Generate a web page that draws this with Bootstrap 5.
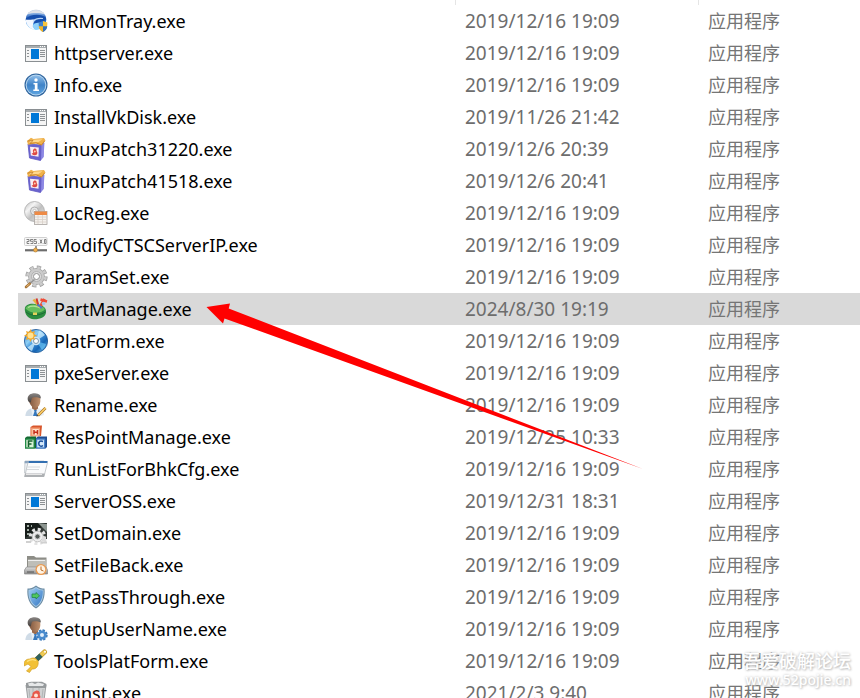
<!DOCTYPE html>
<html lang="zh-CN">
<head>
<meta charset="utf-8">
<meta name="viewport" content="width=device-width, initial-scale=1">
<title>文件列表</title>
<link href="https://cdn.jsdelivr.net/npm/bootstrap@5.3.0/dist/css/bootstrap.min.css" rel="stylesheet">
<style>
body { font-family: "Noto Sans", "Noto Sans CJK SC", sans-serif; background: #fff; color: #000; }
.explorer { padding-left: 18px; }
.files { table-layout: fixed; border-collapse: separate; border-spacing: 0; font-size: 18px; line-height: 32px; }
.files .c-name { width: 438px; }
.files .c-date { width: 243px; }
.files thead th { height: 5px; padding: 0; border-right: 1px solid #e5e5e5; }
.files thead th:last-child { border-right: 0; }
.files tbody td { height: 32px; padding: 0 0 0 9px; color: #6d6d6d; white-space: nowrap; vertical-align: top; }
.files tbody td:first-child { padding-left: 6px; color: #000; }
.files tbody td:nth-child(2) { font-size: 19px; }
.files tbody td:nth-child(3) { font-family: "Noto Sans CJK SC", sans-serif; line-height: 30px; color: #757575; }
.files .picked td { background: #d9d9d9; }
.fi { display: flex; align-items: center; gap: 6px; height: 32px; }
.fi svg { width: 24px; height: 24px; flex: none; }
.pointer-arrow { position: absolute; left: 206px; top: 303px; width: 438px; height: 167px; pointer-events: none; }
.forum-mark { position: absolute; right: 9px; bottom: 8px; color: #fff; font-family: "Noto Sans CJK SC", sans-serif; font-weight: 500; font-size: 18px; line-height: 20px; text-align: right; text-shadow: 0 0 3px #bbb, 1px 1px 2px #ccc; pointer-events: none; }
.forum-mark small { display: block; font-size: 14px; font-family: "Noto Sans", sans-serif; line-height: 20px; }
</style>
</head>
<body>
<svg width="0" height="0" class="position-absolute" aria-hidden="true">
<defs>
<linearGradient id="gGlobe" x1="0" y1="0" x2="0" y2="1"><stop offset="0" stop-color="#d9dde5"/><stop offset=".22" stop-color="#7fa9e0"/><stop offset=".45" stop-color="#0f4cae"/><stop offset=".7" stop-color="#2f8be6"/><stop offset="1" stop-color="#8fdcff"/></linearGradient>
<linearGradient id="gInfo" x1="0" y1="0" x2="0" y2="1"><stop offset="0" stop-color="#8cbce8"/><stop offset=".5" stop-color="#3f83c8"/><stop offset="1" stop-color="#5da3df"/></linearGradient>
<linearGradient id="gDisc" x1="0" y1="0" x2="1" y2="1"><stop offset="0" stop-color="#b9b9b9"/><stop offset=".3" stop-color="#f4f4f4"/><stop offset=".55" stop-color="#c0c0c0"/><stop offset="1" stop-color="#ededed"/></linearGradient>
<linearGradient id="gBlueDisc" x1="0" y1="0" x2="1" y2="1"><stop offset="0" stop-color="#2a6cc0"/><stop offset=".35" stop-color="#8fd0f5"/><stop offset=".5" stop-color="#3c8ed8"/><stop offset=".7" stop-color="#1565b4"/><stop offset="1" stop-color="#82cef5"/></linearGradient>
<linearGradient id="gShield" x1="0" y1="0" x2="1" y2="1"><stop offset="0" stop-color="#9cccf2"/><stop offset="1" stop-color="#3577c4"/></linearGradient>
<linearGradient id="gSkin" x1="0" y1="0" x2="1" y2="0"><stop offset="0" stop-color="#7d543c"/><stop offset="1" stop-color="#c2936f"/></linearGradient>
<linearGradient id="gHair" x1="0" y1="0" x2="0" y2="1"><stop offset="0" stop-color="#8a8684"/><stop offset="1" stop-color="#45403d"/></linearGradient>
<linearGradient id="gGrey" x1="0" y1="0" x2="0" y2="1"><stop offset="0" stop-color="#dedede"/><stop offset="1" stop-color="#8e8e8e"/></linearGradient>

<symbol id="i-globe" viewBox="0 0 24 24">
<circle cx="12" cy="10.700" r="10.300" fill="url(#gGlobe)"/>
<path d="M3.500 5C7 0 17 0 20.500 5 16 3.500 8 3.500 3.500 5Z" fill="#dfe2e8"/>
<path d="M1.700 10C6 5 17 4 22.200 9 20 13 17 14.500 12 14.500 8 14.500 4 13 1.700 10Z" fill="#164fae"/>
<path d="M1.700 10.500C2 16 6 20.500 11 20.800 8.500 18 8 14 12 10.500 8 10 4 11.500 1.700 10.500Z" fill="#f3f8ff"/>
<path d="M9 12.500C11 10 15 9 19 9.500" stroke="#b9d5f6" stroke-width="1.200" fill="none"/>
<path d="M8.500 17C10 14 13 13.500 16 14L15 20C12 21 10 20 8.500 17Z" fill="#8ed0fb"/>
<path d="M19 12 23.300 13.500C23.500 18 22.400 21 19 23Z" fill="#f8c33a"/><path d="M19 12 14.700 13.500C14.500 18 15.600 21 19 23Z" fill="#3f83cf"/>
<path d="M14.700 17.300H19V23C16.500 22 15 20 14.700 17.300Z" fill="#f2b527"/><path d="M19 17.300H23.300C23 20 21.500 22 19 23Z" fill="#316fbd"/>
</symbol>

<symbol id="i-window" viewBox="0 0 24 24" shape-rendering="crispEdges">
<rect x="1" y="4" width="22" height="17" fill="#8a8f92"/><rect x="2" y="7" width="20" height="13" fill="#f5f5f5"/><rect x="2" y="5" width="20" height="2" fill="#a8adb0"/>
<path d="M16 5h1v1h-1zM18 5h1v1h-1zM20 5h1v1h-1z" fill="#fff"/>
<rect x="7" y="8" width="8" height="10" fill="#0078d7"/>
<path d="M3 9h2v1H3zM3 12h2v1H3zM3 15h2v1H3zM16 9h5v1h-5zM16 11h5v1h-5zM16 13h5v1h-5zM16 15h5v1h-5z" fill="#8d9194"/>
</symbol>

<symbol id="i-info" viewBox="0 0 24 24">
<circle cx="12" cy="12" r="11.500" fill="#2f659e"/><circle cx="12" cy="12" r="10.400" fill="#b9d7f0"/><circle cx="12" cy="12" r="9.400" fill="url(#gInfo)"/>
<circle cx="12" cy="7" r="1.700" fill="#fff"/><path d="M9.500 10h4v6.500H15V18H9.300v-1.500h1.500v-5H9.500Z" fill="#fff"/>
</symbol>

<symbol id="i-box" viewBox="0 0 24 24">
<path d="M4 7 17 8 20 5.500 19.500 20 16.500 23.500 5.500 21Z" fill="#6a63cf"/><path d="M17 8 20.500 5.500 19.500 20 16.500 23.500Z" fill="#8d88e4"/>
<path d="M4 7 17 8 16.500 23.500 5.500 21Z" fill="none" stroke="#5f58c2" stroke-width=".8"/>
<path d="M3 4 7 .8 9.500 2 14 1.500 20 .9 21.500 3.500 17.500 8.500 12 6.500 4 7.800Z" fill="#efb14b"/><path d="M7 3 14 2.500 18.500 2.300 14.500 5 5 5.500Z" fill="#ffd98e"/><path d="M3.500 4 9 3.500 6 6.500 12 5.800 17.500 8 20.500 4" fill="none" stroke="#c17b25" stroke-width=".8"/>
<path d="M6 9.700 14.800 10.500 14.500 19.700 6.800 18.500Z" fill="#fbeef0"/>
<path d="M10.500 11.500C12.500 11.300 13 13 12.500 14 14 15.500 13.500 18 11 18.200 9 18.400 7.800 17.500 7.800 16 9 16.700 9.500 16 9 15 8.500 13 9.500 12 10.500 11.500Z" fill="#dd4a44"/><circle cx="10.800" cy="14.500" r="1" fill="#ffd3b0"/>
</symbol>

<symbol id="i-disc" viewBox="0 0 24 24">
<circle cx="10.500" cy="10.500" r="10" fill="url(#gDisc)" stroke="#a9a9a9" stroke-width=".8"/><circle cx="10.500" cy="10" r="4" fill="#e7e7e7" stroke="#a3a3a3" stroke-width=".8"/><circle cx="10.500" cy="10" r="1.600" fill="#fff" stroke="#aaa" stroke-width=".6"/>
<rect x="10.500" y="10.500" width="12.500" height="13" fill="#f5f2ee" stroke="#a9a4a0" stroke-width=".8"/><rect x="10.500" y="10.500" width="12.500" height="3.500" fill="#ee8a45"/>
<path d="M11 16H22.500M11 18.500H22.500M11 21H22.500M14 14V23M18.500 14V23" stroke="#d8cfc8" stroke-width=".8"/>
</symbol>

<symbol id="i-ip" viewBox="0 0 24 24">
<rect x=".5" y="4.500" width="22.500" height="8" rx="1" fill="#f8f8f8" stroke="#d0d0d0"/>
<path d="M2.500 6.500H5V8.500H3V10.500H5.300M9 6.500H6.500V8.300H9V10.500H6.500M12.500 6.500H10V8.300H12.500V10.500H10M14 10.500H14.500M16 6.500 18 10.500M18 6.500 16 10.500M19 10.500H19.400M20.500 6.500H22V10.500H20.500Z" fill="none" stroke="#777" stroke-width=".9"/>
<path d="M12 13V17" stroke="#999" stroke-width="2"/><rect x="1" y="16" width="22" height="2" fill="#878787"/><rect x="1" y="17.500" width="22" height=".8" fill="#555"/><circle cx="11.500" cy="17" r="2" fill="#f4b04b" stroke="#a7772f" stroke-width=".6"/>
</symbol>

<symbol id="i-gear" viewBox="0 0 24 24">
<circle cx="12.500" cy="11.500" r="9" fill="none" stroke="#9c9c9c" stroke-width="4.200" stroke-dasharray="4 3.070"/>
<circle cx="12.500" cy="11.500" r="8.400" fill="#a4a4a4"/>
<circle cx="12.500" cy="11.500" r="9" fill="none" stroke="#cdcdcd" stroke-width="2.800" stroke-dasharray="2.800 4.270" stroke-dashoffset="-.6"/>
<circle cx="12.500" cy="11.500" r="7.700" fill="#cbcbcb"/><circle cx="12.500" cy="11.500" r="5" fill="#dedede" stroke="#b2b2b2"/><circle cx="12.500" cy="11.500" r="3" fill="#fff" stroke="#929292"/>
<path d="M2 22 6 18.500" stroke="#a77437" stroke-width="2.600" stroke-linecap="round"/><path d="M2.500 21.500 5.500 19" stroke="#efc17c" stroke-width="1"/><path d="M6.500 18 10.500 14.500" stroke="#929292" stroke-width="1.600"/>
</symbol>

<symbol id="i-part" viewBox="0 0 24 24">
<path d="M.8 12C1 7 8 6 13 7.500 19 8 22.500 11 22 15 22 20 16 22.500 10 22.300 4 22 .7 17 .8 12Z" fill="#2b8d40"/>
<path d="M1.500 11.500C4 7 10 7 14 8.300 18 9 21.500 11 20.500 13 17 16.500 6 17 1.500 11.500Z" fill="#66bf5e"/>
<path d="M4 10.500C8 8 14 9.500 16 11" stroke="#aee39a" stroke-width="1.400" fill="none"/>
<path d="M2 15C7 19.500 15 19 21.500 15" stroke="#1c6c34" fill="none"/><rect x="9" y="15.500" width="4" height="2.500" fill="#e3d35a"/>
<path d="M9.500 2.500 16 10" stroke="#e9b13c" stroke-width="2.600"/><path d="M12.500 1.500 14.500 9" stroke="#d03a2f" stroke-width="2"/><path d="M16 10 20.500 2" stroke="#ed5236" stroke-width="2.800"/><path d="M16.500 2.500 23 4.500" stroke="#f04b37" stroke-width="2.400"/><path d="M13.500 7.500 18 11" stroke="#4d79cc" stroke-width="2"/><circle cx="19.500" cy="6.500" r="1.800" fill="#a9c7ed"/>
</symbol>

<symbol id="i-plat" viewBox="0 0 24 24">
<circle cx="12" cy="12" r="11.600" fill="url(#gBlueDisc)" stroke="#1c5696" stroke-width=".8"/>
<path d="M12 12 15 1.500A11 11 0 0 1 21 6ZM12 12 8 22A11 11 0 0 1 3.500 18.500Z" fill="#d1f1ff" opacity=".75"/><path d="M12 12 22 15A11 11 0 0 1 18 21Z" fill="#6ac4f5" opacity=".7"/>
<circle cx="12" cy="12" r="4.300" fill="#cfe5f5"/><circle cx="12" cy="12" r="2.500" fill="#fff" stroke="#7c98ae"/>
<path d="M6.500 0 8 3 11 2 10 5 13 6.500 10 8 11 11 8 10 6.500 13 5 10 2 11 3 8 0 6.500 3 5 2 2 5 3Z" fill="#f3a829"/><circle cx="6.500" cy="6.500" r="3" fill="#ffe394"/>
</symbol>

<symbol id="man" viewBox="0 0 24 24">
<path d="M1.500 23C1.500 18.500 4 16 8 15H14C18 16 20 18 20 22L17 23Z" fill="#e8eff5"/><path d="M1.500 23C1.500 19 4 16.500 7 15.800L8.500 23Z" fill="#d0dce7"/>
<path d="M8 12H14V15.500L11.500 17.500 8 15.500Z" fill="#9a6a4c"/>
<path d="M10 17H12.800L12.300 18.500 13.500 23H9L10.500 18.500Z" fill="#3577bd"/>
<path d="M4.500 6C4.500 2 8 1 11 1 15 1 16.800 4 16.300 8.500 16 12.500 13.500 15 11.500 14.700 8 14.500 5.500 12 4.500 6Z" fill="url(#gSkin)"/>
<path d="M3.700 6.500C3.200 2 7 0 11 .2 15 .3 17.200 2.500 16.800 5.500 14 4 11 4.200 8.500 4.500 7.300 5.500 7.300 7.500 6.800 9.500 5 9.500 4 8.500 3.700 6.500Z" fill="url(#gHair)"/>
</symbol>
<symbol id="i-rename" viewBox="0 0 24 24"><use href="#man"/><path d="M14 22.500 21.500 15" stroke="#a97527" stroke-width="2.800"/><path d="M14 22.500 21.500 15" stroke="#ffd36b" stroke-width="1.500"/><path d="M12.300 23.500 13 21.500 15 23Z" fill="#444"/></symbol>
<symbol id="i-setup" viewBox="0 0 24 24"><use href="#man"/><circle cx="18" cy="18" r="4.500" fill="none" stroke="#3a7abb" stroke-width="2.400" stroke-dasharray="2.200 1.330"/><circle cx="18" cy="18" r="3.300" fill="#e3effa" stroke="#4a8bcd" stroke-width="2.600"/></symbol>

<symbol id="i-blocks" viewBox="0 0 24 24">
<path d="M6.500 2 9 .5H18L17 11H6.500Z" fill="#d8562c"/><path d="M7 2.500H16V11.500H7Z" fill="#f39a70"/><path d="M8.500 4H14.800V10.300H8.500Z" fill="#ffe0c9"/><path d="M10 5V9.500M13.500 5V9.500M10 7.300H13.500" stroke="#c42c19" stroke-width="1.500"/>
<path d="M1 13 3 11.500H12V23.500H1Z" fill="#136730"/><path d="M1 13.500H10.700V23.500H1Z" fill="#248c48"/><path d="M2.300 14.800H9.500V22.300H2.300Z" fill="#d9f1d6"/><path d="M4.500 22V16H8.500M4.500 19H7.500" fill="none" stroke="#16612e" stroke-width="1.500"/>
<path d="M12 13 14 11.500H23V22L21.500 23.500H12Z" fill="#1e4d92"/><path d="M12 13.500H21.300V23.500H12Z" fill="#4580ca"/><path d="M13.200 14.800H20V22.300H13.200Z" fill="#d5e9fa"/><path d="M19 16.500C16 15 14.500 17 14.800 19 15 21.500 17.500 21.700 19 20.500" fill="none" stroke="#164b97" stroke-width="1.500"/>
</symbol>

<symbol id="i-run" viewBox="0 0 24 24">
<path d="M1 4H20L17 16H.5Z" fill="#eef1f4" stroke="#c0c5ca" stroke-width=".8"/><path d="M.8 4H20L19.500 6.200H.5Z" fill="#8ca4bd"/>
<path d="M4 5.500H23.500L20 19.500H.7Z" fill="#fafbfc" stroke="#b8bcc0" stroke-width=".8"/><path d="M5 4H23.700L23.200 6H4.500Z" fill="#326fb1"/><path d="M3.500 10H16M3 12.500H15" stroke="#d4d8dc"/><path d="M1.200 16.500H20.800L20 20H.3Z" fill="#adb0b3"/><path d="M2 17.500H18" stroke="#e6e6e6"/>
</symbol>

<symbol id="i-domain" viewBox="0 0 24 24">
<rect x="1" y="2" width="22" height="16" fill="#333936"/><path d="M1 2H23L12 10 1 17Z" fill="#171d1a"/><path d="M3 5H5M3 9H5M3 13H5M7 5H8" stroke="#d1ded4" stroke-width="1.500"/><path d="M14 2 23 11V3Z" fill="#8c9590"/>
<circle cx="13.500" cy="15.500" r="6.800" fill="none" stroke="#e2e2e2" stroke-width="3.800" stroke-dasharray="2.800 2.540"/><circle cx="13.500" cy="15.500" r="5.300" fill="#eee" stroke="#c4c4c4"/><circle cx="13.500" cy="15.500" r="2.600" fill="#515754" stroke="#ccc"/><path d="M18 14C22 15 23 19 22 21L18 20Z" fill="#dcdcdc"/><path d="M2 21H7M17 21.500H23" stroke="#d0d0d0" stroke-width="2"/>
</symbol>

<symbol id="i-back" viewBox="0 0 24 24">
<path d="M3 3H10L12 4.500H22.500V17H3Z" fill="#8d8d87"/><path d="M4 6.500H22V17H4Z" fill="#bebeb8"/><path d="M4 7H21V8H4Z" fill="#eee"/>
<path d="M2.500 14H22L23.500 17V21H.5V17Z" fill="url(#gGrey)" stroke="#888" stroke-width=".7"/><path d="M3 19H10" stroke="#555"/><circle cx="17" cy="16.500" r="5.500" fill="#eb9a50"/><circle cx="17" cy="16.500" r="4.200" fill="#fff4e4"/><path d="M17 13.500V17L19.500 18" stroke="#b96a28" fill="none"/>
</symbol>

<symbol id="i-shield" viewBox="0 0 24 24">
<path d="M12 .5C15 3 18 3.500 20.500 3.500 21.500 12 18.500 20 12 23.500 5.500 20 2.500 12 3.500 3.500 6 3.500 9 3 12 .5Z" fill="#6d8da5"/><path d="M12 2C15 4.200 17 4.700 19.500 4.700 20 12 18 18.500 12 22 6 18.500 4 12 4.500 4.700 7 4.700 9 4.200 12 2Z" fill="#a9cbe6"/><path d="M12 3C14 4.800 16.500 5.400 18.800 5.500 19 12 17 17.800 12 21 7 17.800 5 12 5.200 5.500 7.500 5.400 10 4.800 12 3Z" fill="url(#gShield)"/>
<path d="M8 9H12V7.500L15.500 10.800 12 14V12.500H8Z" fill="#50c75e" stroke="#23854f" stroke-width=".8"/>
</symbol>

<symbol id="i-tool" viewBox="0 0 24 24">
<path d="M12 11 20.500 3" stroke="#c49a2b" stroke-width="5" stroke-linecap="round"/><path d="M13 10 20.500 3" stroke="#f0cb55" stroke-width="3.500" stroke-linecap="round"/><path d="M12.500 10.500 17 6.300" stroke="#2f605f" stroke-width="4.600"/><circle cx="21" cy="2.700" r="1" fill="#fff"/>
<path d="M14 12C15 17 12 20.500 8 20L5.500 23.500 2.500 22 7 17.500 4 15 0 17C-.5 12 2 10 6 10 9 8 12 9 14 12Z" fill="#f2c136" stroke="#d3a12a" stroke-width=".7"/><path d="M3 12.500C6 10.500 9 10 12 11.500" stroke="#ffe381" stroke-width="1.300" fill="none"/>
</symbol>

<symbol id="i-bin" viewBox="0 0 24 24">
<path d="M2 4H22L19.500 23H4.500Z" fill="#d0d2d3" stroke="#8c8f91" stroke-width=".8"/><path d="M2 2 7 .8H18L22.500 3 22 7H2Z" fill="#969a9c"/><path d="M4 2.500 8 1.500 11 3 14 1.500 20 3 19 5H5Z" fill="#e6e8e9"/><path d="M5 8 6.500 22M9 7V22M15 7V22M19 8 17.500 22" stroke="#aaaeb0" stroke-width=".8"/>
<path d="M11.500 10C14 8.500 17 11 15.500 14 18 16 15 20 11 19 7 19.500 6 16 8.500 14.500 8 12 9.500 10.500 11.500 10Z" fill="#e8584b"/><circle cx="12" cy="14.500" r="2" fill="#ffe5d7"/>
</symbol>
</defs>
</svg>

<main class="explorer position-relative vh-100 overflow-hidden">
<table class="files w-100">
<colgroup><col class="c-name"><col class="c-date"><col></colgroup>
<thead><tr><th scope="col" aria-label="名称"></th><th scope="col" aria-label="修改日期"></th><th scope="col" aria-label="类型"></th></tr></thead>
<tbody>
<tr><td><div class="fi"><svg aria-hidden="true"><use href="#i-globe"/></svg><span>HRMonTray.exe</span></div></td><td>2019/12/16 19:09</td><td>应用程序</td></tr>
<tr><td><div class="fi"><svg aria-hidden="true"><use href="#i-window"/></svg><span>httpserver.exe</span></div></td><td>2019/12/16 19:09</td><td>应用程序</td></tr>
<tr><td><div class="fi"><svg aria-hidden="true"><use href="#i-info"/></svg><span>Info.exe</span></div></td><td>2019/12/16 19:09</td><td>应用程序</td></tr>
<tr><td><div class="fi"><svg aria-hidden="true"><use href="#i-window"/></svg><span>InstallVkDisk.exe</span></div></td><td>2019/11/26 21:42</td><td>应用程序</td></tr>
<tr><td><div class="fi"><svg aria-hidden="true"><use href="#i-box"/></svg><span>LinuxPatch31220.exe</span></div></td><td>2019/12/6 20:39</td><td>应用程序</td></tr>
<tr><td><div class="fi"><svg aria-hidden="true"><use href="#i-box"/></svg><span>LinuxPatch41518.exe</span></div></td><td>2019/12/6 20:41</td><td>应用程序</td></tr>
<tr><td><div class="fi"><svg aria-hidden="true"><use href="#i-disc"/></svg><span>LocReg.exe</span></div></td><td>2019/12/16 19:09</td><td>应用程序</td></tr>
<tr><td><div class="fi"><svg aria-hidden="true"><use href="#i-ip"/></svg><span>ModifyCTSCServerIP.exe</span></div></td><td>2019/12/16 19:09</td><td>应用程序</td></tr>
<tr><td><div class="fi"><svg aria-hidden="true"><use href="#i-gear"/></svg><span>ParamSet.exe</span></div></td><td>2019/12/16 19:09</td><td>应用程序</td></tr>
<tr class="picked"><td><div class="fi"><svg aria-hidden="true"><use href="#i-part"/></svg><span>PartManage.exe</span></div></td><td>2024/8/30 19:19</td><td>应用程序</td></tr>
<tr><td><div class="fi"><svg aria-hidden="true"><use href="#i-plat"/></svg><span>PlatForm.exe</span></div></td><td>2019/12/16 19:09</td><td>应用程序</td></tr>
<tr><td><div class="fi"><svg aria-hidden="true"><use href="#i-window"/></svg><span>pxeServer.exe</span></div></td><td>2019/12/16 19:09</td><td>应用程序</td></tr>
<tr><td><div class="fi"><svg aria-hidden="true"><use href="#i-rename"/></svg><span>Rename.exe</span></div></td><td>2019/12/16 19:09</td><td>应用程序</td></tr>
<tr><td><div class="fi"><svg aria-hidden="true"><use href="#i-blocks"/></svg><span>ResPointManage.exe</span></div></td><td>2019/12/25 10:33</td><td>应用程序</td></tr>
<tr><td><div class="fi"><svg aria-hidden="true"><use href="#i-run"/></svg><span>RunListForBhkCfg.exe</span></div></td><td>2019/12/16 19:09</td><td>应用程序</td></tr>
<tr><td><div class="fi"><svg aria-hidden="true"><use href="#i-window"/></svg><span>ServerOSS.exe</span></div></td><td>2019/12/31 18:31</td><td>应用程序</td></tr>
<tr><td><div class="fi"><svg aria-hidden="true"><use href="#i-domain"/></svg><span>SetDomain.exe</span></div></td><td>2019/12/16 19:09</td><td>应用程序</td></tr>
<tr><td><div class="fi"><svg aria-hidden="true"><use href="#i-back"/></svg><span>SetFileBack.exe</span></div></td><td>2019/12/16 19:09</td><td>应用程序</td></tr>
<tr><td><div class="fi"><svg aria-hidden="true"><use href="#i-shield"/></svg><span>SetPassThrough.exe</span></div></td><td>2019/12/16 19:09</td><td>应用程序</td></tr>
<tr><td><div class="fi"><svg aria-hidden="true"><use href="#i-setup"/></svg><span>SetupUserName.exe</span></div></td><td>2019/12/16 19:09</td><td>应用程序</td></tr>
<tr><td><div class="fi"><svg aria-hidden="true"><use href="#i-tool"/></svg><span>ToolsPlatForm.exe</span></div></td><td>2019/12/16 19:09</td><td>应用程序</td></tr>
<tr><td><div class="fi"><svg aria-hidden="true"><use href="#i-bin"/></svg><span>uninst.exe</span></div></td><td>2021/2/3 9:40</td><td>应用程序</td></tr>
</tbody>
</table>
<svg class="pointer-arrow" viewBox="0 0 438 167" aria-hidden="true"><path d="M.5 4 24 .5 22.700 5.500 437 166 18.500 15.500 17 20.500Z" fill="#f00"/></svg>
<div class="forum-mark">吾爱破解论坛<small>www.52pojie.cn</small></div>
</main>
<script src="https://cdn.jsdelivr.net/npm/bootstrap@5.3.0/dist/js/bootstrap.bundle.min.js"></script>
</body>
</html>
